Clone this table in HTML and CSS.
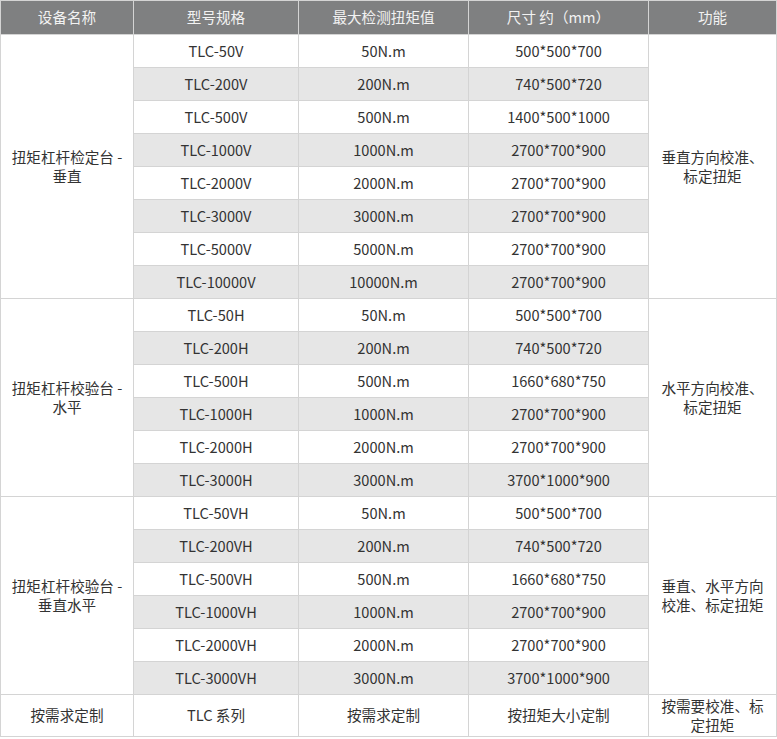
FILE: index.html
```html
<!DOCTYPE html>
<html lang="zh">
<head>
<meta charset="utf-8">
<link rel="stylesheet" href="styles.css">
</head>
<body>
<table class="spec">
  <colgroup>
    <col class="c1"><col class="c2"><col class="c3"><col class="c4"><col class="c5">
  </colgroup>
  <thead>
    <tr><th>设备名称</th><th>型号规格</th><th>最大检测扭矩值</th><th>尺寸 约（mm）</th><th>功能</th></tr>
  </thead>
  <tbody>
    <tr><td rowspan="8" class="group">扭矩杠杆检定台 -<br>垂直</td><td>TLC-50V</td><td>50N.m</td><td>500*500*700</td><td rowspan="8" class="group">垂直方向校准、<br>标定扭矩</td></tr>
    <tr class="alt"><td>TLC-200V</td><td>200N.m</td><td>740*500*720</td></tr>
    <tr><td>TLC-500V</td><td>500N.m</td><td>1400*500*1000</td></tr>
    <tr class="alt"><td>TLC-1000V</td><td>1000N.m</td><td>2700*700*900</td></tr>
    <tr><td>TLC-2000V</td><td>2000N.m</td><td>2700*700*900</td></tr>
    <tr class="alt"><td>TLC-3000V</td><td>3000N.m</td><td>2700*700*900</td></tr>
    <tr><td>TLC-5000V</td><td>5000N.m</td><td>2700*700*900</td></tr>
    <tr class="alt"><td>TLC-10000V</td><td>10000N.m</td><td>2700*700*900</td></tr>

    <tr><td rowspan="6" class="group">扭矩杠杆校验台 -<br>水平</td><td>TLC-50H</td><td>50N.m</td><td>500*500*700</td><td rowspan="6" class="group">水平方向校准、<br>标定扭矩</td></tr>
    <tr class="alt"><td>TLC-200H</td><td>200N.m</td><td>740*500*720</td></tr>
    <tr><td>TLC-500H</td><td>500N.m</td><td>1660*680*750</td></tr>
    <tr class="alt"><td>TLC-1000H</td><td>1000N.m</td><td>2700*700*900</td></tr>
    <tr><td>TLC-2000H</td><td>2000N.m</td><td>2700*700*900</td></tr>
    <tr class="alt"><td>TLC-3000H</td><td>3000N.m</td><td>3700*1000*900</td></tr>

    <tr><td rowspan="6" class="group">扭矩杠杆校验台 -<br>垂直水平</td><td>TLC-50VH</td><td>50N.m</td><td>500*500*700</td><td rowspan="6" class="group">垂直、水平方向<br>校准、标定扭矩</td></tr>
    <tr class="alt"><td>TLC-200VH</td><td>200N.m</td><td>740*500*720</td></tr>
    <tr><td>TLC-500VH</td><td>500N.m</td><td>1660*680*750</td></tr>
    <tr class="alt"><td>TLC-1000VH</td><td>1000N.m</td><td>2700*700*900</td></tr>
    <tr><td>TLC-2000VH</td><td>2000N.m</td><td>2700*700*900</td></tr>
    <tr class="alt"><td>TLC-3000VH</td><td>3000N.m</td><td>3700*1000*900</td></tr>

    <tr class="last"><td>按需求定制</td><td>TLC 系列</td><td>按需求定制</td><td>按扭矩大小定制</td><td class="group">按需要校准、标<br>定扭矩</td></tr>
  </tbody>
</table>
</body>
</html>
```

FILE: styles.css
```css
html, body {
  margin: 0;
  padding: 0;
  background: #ffffff;
}
body {
  font-family: "Noto Sans CJK SC", "Noto Sans", sans-serif;
  font-size: 14.6px;
  color: #333333;
}
.spec {
  border-collapse: collapse;
  table-layout: fixed;
  width: 776px;
}
.c1 { width: 133px; }
.c2 { width: 165px; }
.c3 { width: 170px; }
.c4 { width: 180px; }
.c5 { width: 128px; }
.spec th,
.spec td {
  border: 1px solid #d4d4d4;
  text-align: center;
  vertical-align: middle;
  padding: 0 6px 2px;
  line-height: 19px;
  font-weight: normal;
}
.spec th {
  height: 31px;
  background: #7f8081;
  color: #f2f2f2;
}
.spec td {
  height: 30px;
}
.spec tr.alt td {
  background: #e6e6e6;
}
.spec tr.last td {
  height: 39px;
}
```
